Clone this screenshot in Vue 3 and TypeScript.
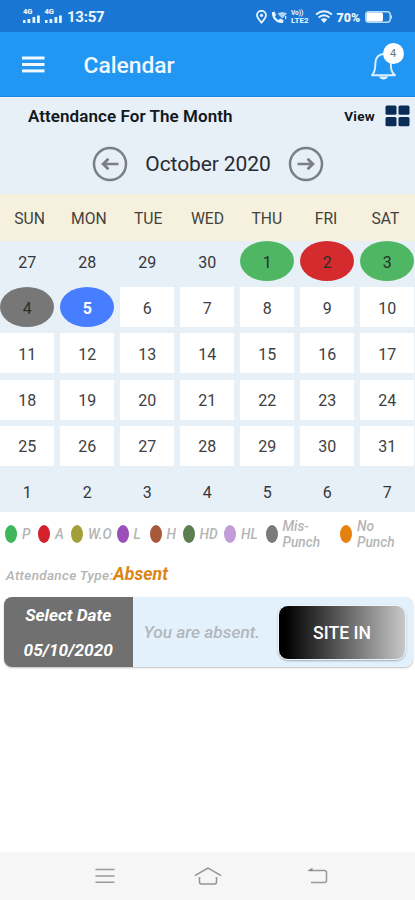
<script setup lang="ts">
interface Day {
  n: number
  kind: 'out' | 'in' | 'present' | 'absent' | 'mis' | 'selected'
}

const weekdays: string[] = ['SUN', 'MON', 'TUE', 'WED', 'THU', 'FRI', 'SAT']

const marks: Record<number, Day['kind']> = { 1: 'present', 2: 'absent', 3: 'present', 4: 'mis', 5: 'selected' }

const days: Day[] = [
  ...[27, 28, 29, 30].map((n): Day => ({ n, kind: 'out' })),
  ...Array.from({ length: 31 }, (_, i): Day => ({ n: i + 1, kind: marks[i + 1] ?? 'in' })),
  ...[1, 2, 3, 4, 5, 6, 7].map((n): Day => ({ n, kind: 'out' })),
]

const legend: { label: string; color: string; width: number }[] = [
  { label: 'P', color: '#3fb65c', width: 33 },
  { label: 'A', color: '#d3202a', width: 33 },
  { label: 'W.O', color: '#a3a03a', width: 45.5 },
  { label: 'L', color: '#9c4fb8', width: 33 },
  { label: 'H', color: '#a9583a', width: 33 },
  { label: 'HD', color: '#5b7f4e', width: 41.5 },
  { label: 'HL', color: '#c29cd8', width: 41.5 },
  { label: 'Mis-\nPunch', color: '#7b7b7b', width: 74.5 },
  { label: 'No\nPunch', color: '#e5820f', width: 70 },
]
</script>

<template>
  <div class="screen">
    <div class="status">
      <div class="status-left">
        <div v-for="s in 2" :key="s" class="signal">
          <span class="net">4G</span>
          <svg width="18" height="8" viewBox="0 0 18 8" fill="#e6f2fc">
            <rect x="0" y="5" width="2.5" height="3" /><rect x="4.5" y="4" width="2.8" height="4" />
            <rect x="9.5" y="2" width="2.8" height="6" /><rect x="14" y="0.5" width="2.8" height="7.5" />
          </svg>
        </div>
        <span class="clock">13:57</span>
      </div>
      <div class="status-right">
        <svg class="pin" width="11" height="14" viewBox="0 0 11 14" fill="none" stroke="#e6f2fc" stroke-width="1.8">
          <path d="M5.5 12.6C3.2 10 1 7.8 1 5.3a4.5 4.5 0 0 1 9 0c0 2.500-2.200 4.700-4.500 7.300z" />
          <circle cx="5.500" cy="5.400" r="1.200" fill="#e6f2fc" stroke-width="1" />
        </svg>
        <svg class="call" width="17" height="13" viewBox="0 0 17 13" fill="#e6f2fc">
          <path d="M1 1.200 3.400.5 5.200 4 3.900 5.300c.8 1.700 2 2.900 3.700 3.600l1.500-1.400 3.500 1.700-.5 2.600C6.500 13.400.2 7.600 1 1.200z" />
          <path d="M6.500 2.600Q11.300-.4 16 2.600L11.300 7.600z" opacity=".75" />
          <path d="M14.600 5v3" stroke="#e6f2fc" stroke-width="1.200" />
        </svg>
        <div class="volte"><span>Vo))</span><span>LTE2</span></div>
        <svg class="wifi" width="18" height="14" viewBox="0 0 18 14" fill="none" stroke="#e6f2fc" stroke-width="1.900">
          <path d="M1 4.500Q9-2 17 4.500M3.600 7.500Q9 3 14.400 7.500" />
          <path d="M5.800 9.600Q9 7 12.200 9.600L9 13z" fill="#e6f2fc" stroke="none" />
        </svg>
        <span class="pct">70%</span>
        <svg class="battery" width="28" height="12" viewBox="0 0 28 12">
          <rect x=".8" y=".8" width="24.400" height="10.400" rx="3" fill="none" stroke="#b9daf6" stroke-width="1.500" />
          <rect x="1.500" y="1.500" width="16.500" height="9" rx="2" fill="#fff" />
          <path d="M26 3.500q2 2.500 0 5z" fill="#d6eafa" />
        </svg>
      </div>
    </div>

    <header class="appbar">
      <svg class="burger" width="23" height="17" viewBox="0 0 23 17" fill="#f2f9ff">
        <rect y="0.500" width="22.500" height="3" /><rect y="7" width="22.500" height="3" /><rect y="13.400" width="22.500" height="3" />
      </svg>
      <h1>Calendar</h1>
      <div class="bell">
        <svg width="27" height="30" viewBox="0 0 27 30">
          <path d="M2 23.200C5.500 20 5 16 5.500 10.500C6 5 8.500 2.500 13 2c5 0 7.500 4 7.800 9c.2 5.500 0 9 4.200 12.200z" fill="none" stroke="#def0ff" stroke-width="1.900" stroke-linejoin="round" />
          <path d="M9 24.500h9c-1 4-8 4-9 0z" fill="#e2f2ff" />
        </svg>
        <span class="badge">4</span>
      </div>
    </header>

    <main class="calendar">
      <div class="heading">
        <h2>Attendance For The Month</h2>
        <span class="view">View</span>
        <svg width="25" height="22" viewBox="0 0 25 22" fill="#0b2c57">
          <rect x=".5" y=".5" width="11" height="9.300" rx="1.500" /><rect x="13.500" y=".5" width="11" height="9.300" rx="1.500" />
          <rect x=".5" y="12" width="11" height="9.300" rx="1.500" /><rect x="13.500" y="12" width="11" height="9.300" rx="1.500" />
        </svg>
      </div>
      <div class="month">
        <svg width="36" height="36" viewBox="0 0 36 36" fill="none" stroke="#7b7e82" stroke-width="2.500">
          <circle cx="18" cy="18" r="16" /><path d="M26.500 18H11M16.500 12.700 11 18l5.500 5.300" stroke-width="2.700" />
        </svg>
        <span>October 2020</span>
        <svg width="36" height="36" viewBox="0 0 36 36" fill="none" stroke="#7b7e82" stroke-width="2.500">
          <circle cx="18" cy="18" r="16" /><path d="M9.500 18H25M19.500 12.700 25 18l-5.500 5.300" stroke-width="2.700" />
        </svg>
      </div>
      <div class="weekdays">
        <span v-for="w in weekdays" :key="w">{{ w }}</span>
      </div>
      <div class="days">
        <span v-for="(d, i) in days" :key="i" class="day" :class="d.kind">{{ d.n }}</span>
      </div>
    </main>

    <div class="legend">
      <div v-for="l in legend" :key="l.label" class="key" :style="{ width: l.width + 'px' }">
        <i :style="{ background: l.color }"></i><span>{{ l.label }}</span>
      </div>
    </div>

    <div class="type"><span>Attendance Type:</span><strong>Absent</strong></div>

    <section class="card">
      <div class="date"><span>Select Date</span><span class="value">05/10/2020</span></div>
      <p>You are absent.</p>
      <button type="button">SITE IN</button>
    </section>

    <nav class="navbar">
      <svg width="20" height="18" viewBox="0 0 20 18" fill="none" stroke="#999" stroke-width="1.500">
        <path d="M.5 2.500h19M.5 9h19M.5 15.300h19" />
      </svg>
      <svg width="28" height="20" viewBox="0 0 28 20" fill="none" stroke="#929292" stroke-width="1.500">
        <path d="M.8 9.700 14 2l13.200 7.700M5.500 11v5q0 2 2 2h13q2 0 2-2v-5" />
      </svg>
      <svg width="22" height="18" viewBox="0 0 22 18" fill="none" stroke="#999" stroke-width="1.500">
        <path d="M2 3.500h15.500q2 0 2 2v8q0 2-2 2H4" /><path d="M.3 4 5.500.7v3.300z" fill="#888" stroke="none" />
      </svg>
    </nav>
  </div>
</template>

<style>
body { background: #fff; overflow: hidden; }
</style>

<style scoped>
* { box-sizing: border-box; }
.screen { width: 415px; height: 900px; display: flex; flex-direction: column; background: #fff; font-family: Roboto, "Noto Sans", sans-serif; overflow: hidden; }
h1, h2, p { margin: 0; }
svg { display: block; flex: none; }

.status { height: 32px; flex: none; background: #1976d2; color: #edf6fe; display: flex; justify-content: space-between; padding: 0 22.500px 0 23px; }
.status-left { display: flex; padding-top: 9px; height: 24px; }
.signal { width: 21.500px; display: flex; flex-direction: column; }
.net { font-size: 7.500px; line-height: 6px; font-weight: 900; }
.clock { font-size: 15px; line-height: 17px; font-weight: 700; letter-spacing: -.25px; margin-left: 1px; }
.status-right { display: flex; align-items: center; height: 34px; }
.call { margin-left: 4px; }
.volte { display: flex; flex-direction: column; width: 22px; margin-left: 3px; font-size: 8px; line-height: 8px; font-weight: 700; }
.volte span:first-child { font-size: 6.500px; line-height: 7px; }
.wifi { margin-left: 2px; }
.pct { font-size: 12.500px; font-weight: 900; margin-left: 3.500px; width: 24px; }
.battery { margin-left: 4px; }

.appbar { height: 65px; flex: none; background: #2196f3; border-bottom: 1px solid #1b86df; display: flex; align-items: center; padding: 0 11.500px 0 21.500px; }
.appbar h1 { color: #f3faff; font-size: 22.800px; line-height: 26px; font-weight: 500; margin: 4px auto 0 39px; }
.bell { position: relative; width: 34px; height: 38px; padding-top: 7px; }
.badge { position: absolute; left: 13px; top: -2px; width: 21px; height: 21px; border-radius: 50%; background: #fff; color: #68757e; font-size: 11px; line-height: 21px; text-align: center; }

.calendar { flex: none; height: 415px; background: #e7eff7; display: flex; flex-direction: column; }
.heading { display: flex; align-items: center; height: 37px; padding: 0 5px 0 28px; color: #111820; }
.heading h2 { font-size: 17px; letter-spacing: .07px; font-weight: 600; margin-right: auto; }
.view { font-size: 13.500px; letter-spacing: .3px; font-weight: 700; margin-right: 10px; }
.month { height: 60px; display: flex; align-items: center; justify-content: space-between; width: 232px; margin-left: 92px; padding-bottom: 1px; color: #272b30; font-size: 21px; }
.month span { font-weight: 370; letter-spacing: -.1px; }
.weekdays { height: 47px; flex: none; display: grid; grid-template-columns: repeat(7, 1fr); align-items: center; text-align: center; background: #f6f1de; color: #42423c; font-size: 15.700px; font-weight: 370; padding-top: 2px; }
.days { display: grid; grid-template-columns: repeat(7, 54px); grid-auto-rows: 40px; gap: 6.200px 6px; margin-left: .3px; }
.day { display: flex; align-items: center; justify-content: center; padding-top: 2px; font-size: 16px; font-weight: 380; color: #3e4043; }
.out { color: #34373a; }
.in { background: #fff; }
.present, .absent, .mis, .selected { border-radius: 50%; color: #26302a; }
.present { background: #4fb763; }
.absent { background: #d42b2e; }
.mis { background: #777; }
.selected { background: #477eff; color: #fff; font-weight: 700; }

.legend { display: flex; flex: none; height: 44px; padding: 0 0 0 5px; }
.key { display: flex; align-items: center; flex: none; color: #b5b5b5; font-size: 13.700px; line-height: 16px; font-style: italic; font-weight: 500; white-space: pre; }
.key i { width: 12px; height: 18px; border-radius: 50%; margin-right: 5px; flex: none; }
.type { display: flex; align-items: baseline; flex: none; height: 41px; padding: 8px 0 0 6px; font-style: italic; line-height: 21px; }
.type span { color: #b4b4b4; font-size: 13.500px; letter-spacing: .33px; font-weight: 500; }
.type strong { color: #dd8514; font-size: 17.700px; font-weight: 700; }

.card { display: flex; align-items: center; flex: none; height: 70px; margin: 0 2px 0 4px; border-radius: 8px; overflow: hidden; background: #e3f1fd; box-shadow: 0 1px 2px rgba(0, 0, 0, .25); }
.date { width: 128.500px; height: 70px; background: #707070; color: #fff; display: flex; flex-direction: column; align-items: center; justify-content: space-between; padding: 8px 0 6px; font-size: 17.300px; line-height: 21px; font-weight: 700; font-style: italic; }
.card p { color: #b1b7bc; font-size: 17.300px; font-style: italic; font-weight: 500; margin: 0 auto 0 11px; }
button { width: 128px; height: 55px; margin-right: 7px; padding: 1px 0 0 0; border: 1px solid #eef6fb; border-radius: 10px; background: linear-gradient(90deg, #000 6%, #c9c9c9) border-box; box-shadow: 0 1px 2px rgba(0, 0, 0, .3); color: #fff; font: 500 17.600px Roboto, sans-serif; }

.navbar { margin-top: auto; height: 48px; flex: none; background: #f6f6f6; display: flex; justify-content: space-between; align-items: center; padding: 0 86px 0 94.500px; }
.navbar svg:nth-child(2) { margin-right: 5px; }
</style>
